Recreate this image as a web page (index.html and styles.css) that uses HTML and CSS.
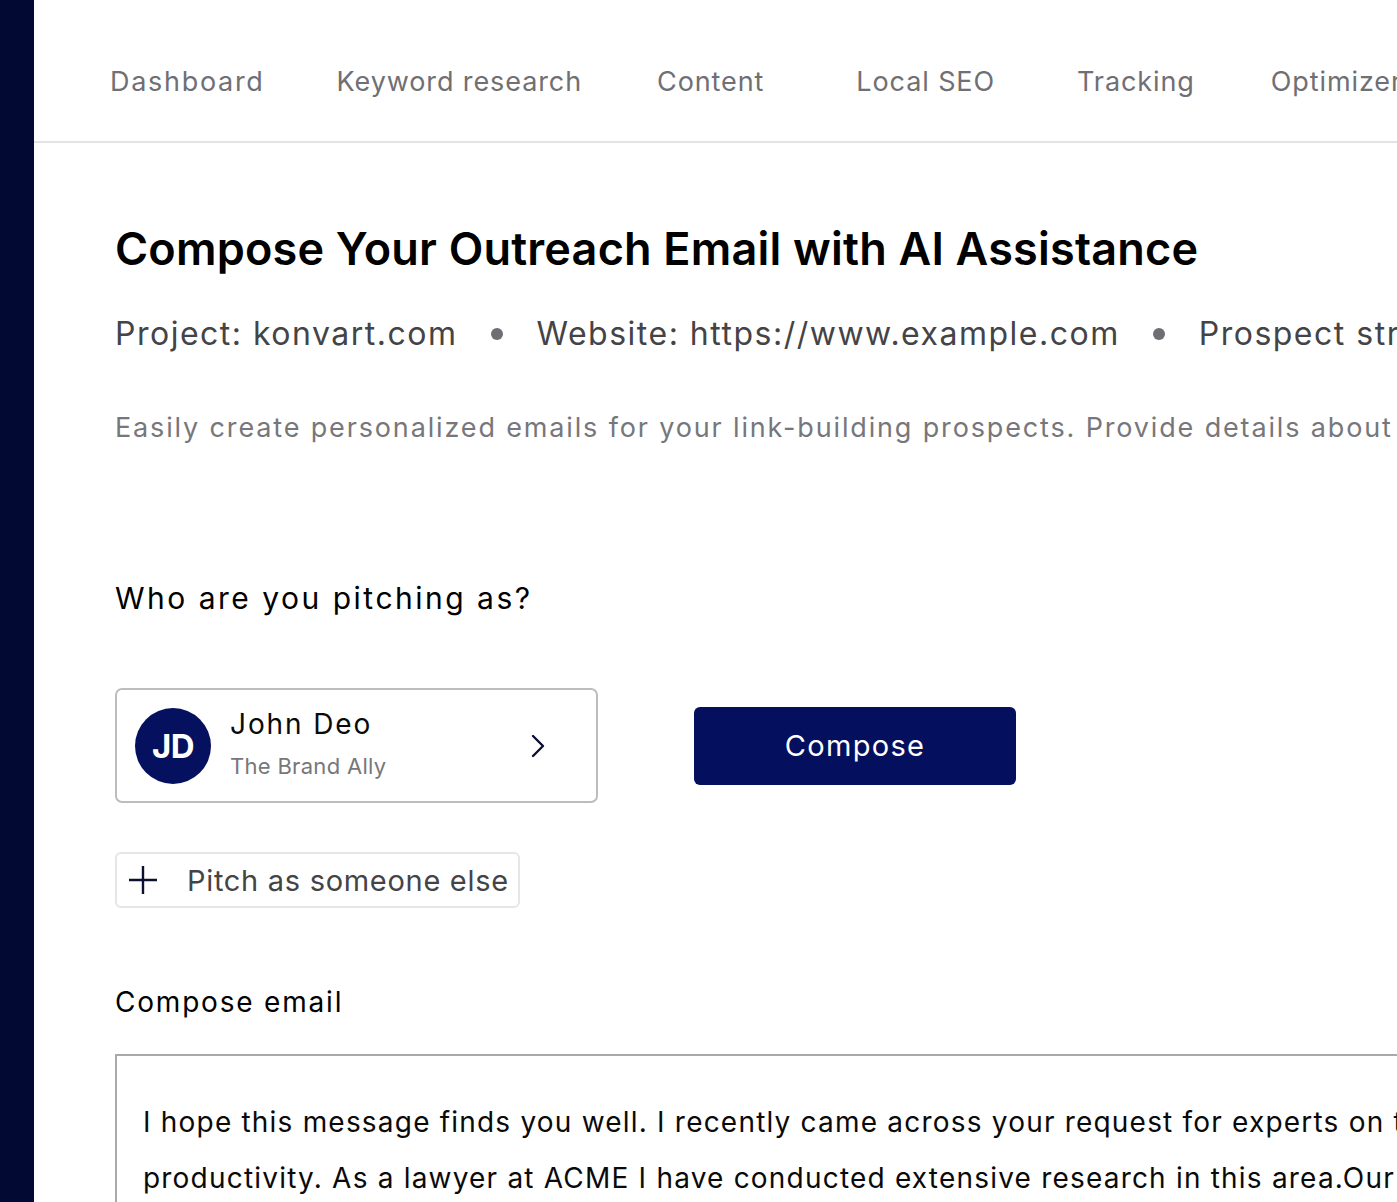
FILE: index.html
```html
<!DOCTYPE html>
<html lang="en">
<head>
<meta charset="utf-8">
<title>Compose Outreach Email</title>
<link rel="stylesheet" href="styles.css">
</head>
<body>
<div class="app">
  <aside class="sidebar"></aside>
  <main class="main">
    <nav class="topnav">
      <a class="nav-item nav-dashboard">Dashboard</a>
      <a class="nav-item nav-keyword">Keyword research</a>
      <a class="nav-item nav-content">Content</a>
      <a class="nav-item nav-local">Local SEO</a>
      <a class="nav-item nav-tracking">Tracking</a>
      <a class="nav-item nav-optimizer">Optimizer</a>
    </nav>
    <section class="content">
      <h1 class="title">Compose Your Outreach Email with AI Assistance</h1>
      <div class="meta">
        <span class="meta-item">Project: konvart.com</span>
        <span class="dot"></span>
        <span class="meta-item">Website: https://www.example.com</span>
        <span class="dot"></span>
        <span class="meta-item">Prospect strategy: Guest posting</span>
      </div>
      <p class="desc">Easily create personalized emails for your link-building prospects. Provide details about your pitch and let AI do the rest.</p>

      <h2 class="question">Who are you pitching as?</h2>
      <div class="pitch-row">
        <div class="persona-card">
          <div class="avatar">JD</div>
          <div class="persona-info">
            <div class="persona-name">John Deo</div>
            <div class="persona-sub">The Brand Ally</div>
          </div>
          <svg class="chevron" width="16" height="26" viewBox="0 0 16 26" fill="none">
            <path d="M3 3 L13 13 L3 23" stroke="#0b1033" stroke-width="2.4" stroke-linecap="round" stroke-linejoin="round"/>
          </svg>
        </div>
        <button class="compose-btn">Compose</button>
      </div>
      <button class="add-persona">
        <svg class="plus" width="32" height="32" viewBox="0 0 32 32" fill="none">
          <path d="M16 2 V30 M2 16 H30" stroke="#0b1033" stroke-width="2.4"/>
        </svg>
        <span class="add-label">Pitch as someone else</span>
      </button>

      <h3 class="field-label">Compose email</h3>
      <div class="email-box">
        <p class="email-text">I hope this message finds you well. I recently came across your request for experts on the topic of remote work and its impact on employee<br>productivity. As a lawyer at ACME I have conducted extensive research in this area.Our findings reveal some surprising insights.</p>
      </div>
    </section>
  </main>
</div>
</body>
</html>
```
FILE: styles.css
```css
* { box-sizing: border-box; }
html, body { margin: 0; padding: 0; }
body {
  font-family: "Inter", "Noto Sans", sans-serif;
  background: #ffffff;
  color: #000;
  overflow: hidden;
}
.app {
  display: flex;
  min-height: 1202px;
  height: 1202px;
}
.sidebar {
  width: 34px;
  flex: 0 0 34px;
  background: #020a33;
}
.main {
  flex: 1;
  min-width: 0;
  overflow: hidden;
}
.topnav {
  height: 143px;
  border-bottom: 2px solid #e3e3e3;
  display: flex;
  align-items: center;
  padding: 22px 0 0 76px;
  white-space: nowrap;
}
.nav-item {
  font-size: 27px;
  color: #6f6f74;
  letter-spacing: 0.9px;
  flex: none;
}
.nav-dashboard { margin-right: 72px; letter-spacing: 1.7px; }
.nav-keyword { margin-right: 75px; }
.nav-content { margin-right: 92px; }
.nav-local { margin-right: 82px; }
.nav-tracking { margin-right: 76px; }

.content {
  padding: 78px 0 0 81px;
}
.title {
  margin: 0;
  font-size: 45px;
  font-weight: 600;
  line-height: 56px;
  white-space: nowrap;
  letter-spacing: 0.2px;
}
.meta {
  display: flex;
  align-items: center;
  margin-top: 37px;
  white-space: nowrap;
  color: #444447;
  font-size: 32px;
  line-height: 40px;
}
.meta-item { flex: none; letter-spacing: 1.5px; }
.dot {
  width: 12px;
  height: 12px;
  border-radius: 50%;
  background: #6e6e73;
  margin: 0 34px 0 33px;
  flex: none;
}
.desc {
  margin: 57px 0 0;
  font-size: 27px;
  line-height: 34px;
  color: #77777b;
  white-space: nowrap;
  letter-spacing: 1.85px;
}
.question {
  margin: 135px 0 0;
  font-size: 30px;
  font-weight: 400;
  line-height: 36px;
  letter-spacing: 2.5px;
}
.pitch-row {
  display: flex;
  align-items: center;
  margin-top: 72px;
  gap: 96px;
}
.persona-card {
  width: 483px;
  height: 115px;
  border: 2px solid #bdbdbd;
  border-radius: 7px;
  display: flex;
  align-items: center;
  padding: 0 50px 0 18px;
}
.avatar {
  width: 76px;
  height: 76px;
  border-radius: 50%;
  background: #05115f;
  color: #fff;
  font-weight: 700;
  font-size: 33px;
  display: flex;
  align-items: center;
  justify-content: center;
  flex: none;
  letter-spacing: -0.5px;
}
.persona-info {
  flex: 1;
  margin-left: 19px;
  margin-top: -4px;
}
.persona-name {
  font-size: 28px;
  line-height: 34px;
  color: #0a0a0a;
  letter-spacing: 1.9px;
}
.persona-sub {
  font-size: 22px;
  line-height: 30px;
  color: #77777b;
  margin-top: 10px;
  letter-spacing: 0.3px;
}
.chevron { flex: none; }
.compose-btn {
  width: 322px;
  height: 78px;
  background: #04105e;
  color: #fff;
  border: none;
  border-radius: 6px;
  font-family: inherit;
  font-size: 29px;
  letter-spacing: 1.3px;
}
.add-persona {
  display: flex;
  align-items: center;
  justify-content: flex-start;
  margin-top: 49px;
  height: 56px;
  width: 405px;
  padding: 0 0 0 10px;
  background: #fff;
  border: 2px solid #e6e6e6;
  border-radius: 6px;
  font-family: inherit;
  font-size: 29px;
  color: #444447;
  letter-spacing: 0.7px;
  white-space: nowrap;
  text-align: left;
}
.add-persona .plus { margin-right: 28px; flex: none; }
.add-label { flex: none; }
.field-label {
  margin: 76px 0 0;
  font-size: 28px;
  font-weight: 400;
  line-height: 36px;
  letter-spacing: 1.8px;
}
.email-box {
  margin-top: 34px;
  width: 1400px;
  height: 300px;
  border: 2px solid #a9a9a9;
  padding: 38px 0 0 26px;
}
.email-text {
  margin: 0;
  font-size: 28px;
  line-height: 56px;
  white-space: nowrap;
  color: #0a0a0a;
  letter-spacing: 1.2px;
}
```
